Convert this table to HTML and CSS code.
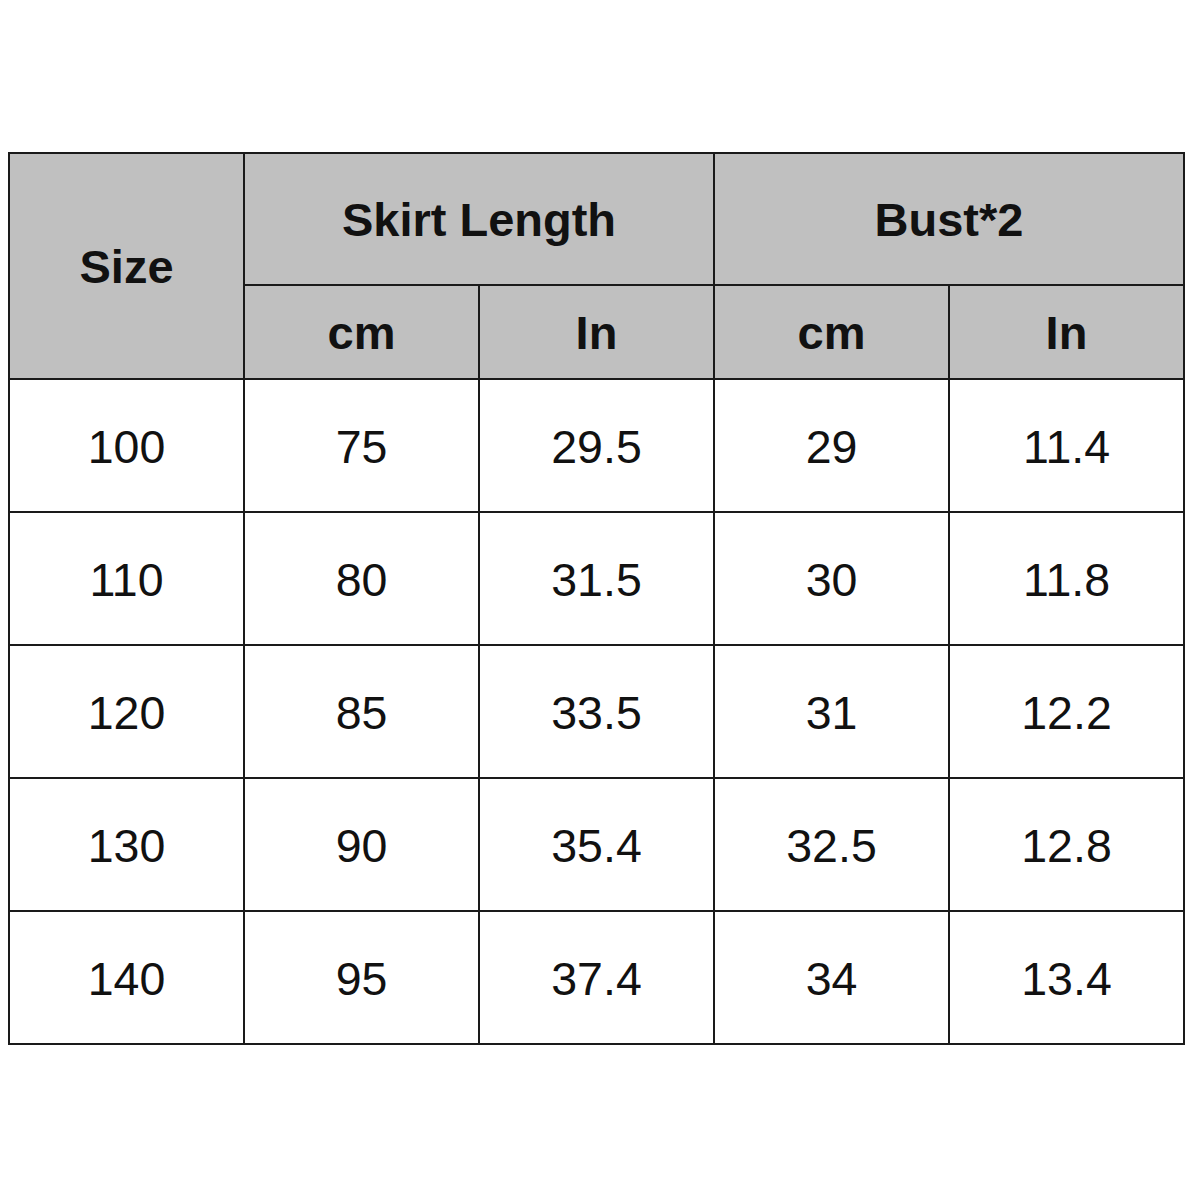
FILE: index.html
```html
<!DOCTYPE html>
<html>
<head>
<meta charset="utf-8">
<link rel="stylesheet" href="styles.css">
</head>
<body>
<table class="chart">
  <colgroup>
    <col class="c"><col class="c"><col class="c"><col class="c"><col class="c">
  </colgroup>
  <tr class="h1">
    <th rowspan="2">Size</th>
    <th colspan="2">Skirt Length</th>
    <th colspan="2">Bust*2</th>
  </tr>
  <tr class="h2">
    <th>cm</th><th>In</th><th>cm</th><th>In</th>
  </tr>
  <tr class="row"><td>100</td><td>75</td><td>29.5</td><td>29</td><td>11.4</td></tr>
  <tr class="row"><td>110</td><td>80</td><td>31.5</td><td>30</td><td>11.8</td></tr>
  <tr class="row"><td>120</td><td>85</td><td>33.5</td><td>31</td><td>12.2</td></tr>
  <tr class="row"><td>130</td><td>90</td><td>35.4</td><td>32.5</td><td>12.8</td></tr>
  <tr class="row"><td>140</td><td>95</td><td>37.4</td><td>34</td><td>13.4</td></tr>
</table>
</body>
</html>
```
FILE: styles.css
```css
html, body {
  margin: 0;
  padding: 0;
  background: #ffffff;
}
body {
  width: 1200px;
  height: 1200px;
  padding-top: 152px;
  padding-left: 8px;
  box-sizing: border-box;
  font-family: "Liberation Sans", Arial, sans-serif;
}
.chart {
  border-collapse: collapse;
  table-layout: fixed;
  width: 1177px;
  color: #111111;
}
.c {
  width: 235px;
}
.chart th, .chart td {
  border: 2px solid #1a1a1a;
  text-align: center;
  vertical-align: middle;
  padding: 0;
}
.chart th {
  background: #c0c0c0;
  font-weight: bold;
  font-size: 47px;
}
.chart td {
  font-size: 46.5px;
  font-weight: normal;
  padding-top: 2px;
}
.h1 { height: 132px; }
.h2 { height: 94px; }
.row { height: 133px; }
```
